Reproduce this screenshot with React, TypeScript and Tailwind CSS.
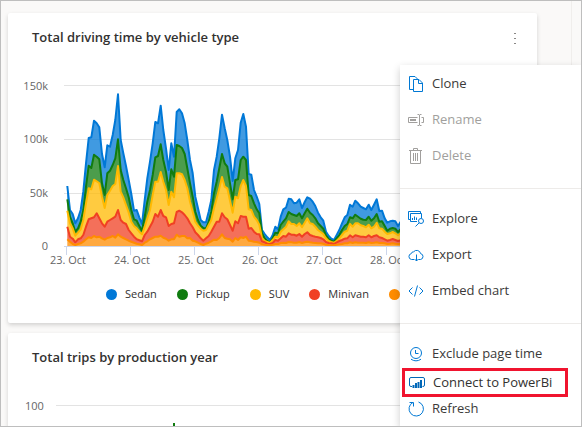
import React from "react";

type Series = { name: string; color: string; tops: number[] };

const BASE = 498;
const STEP = 8;
const START = 22;

/* Upper edge of every stacked area, one value an hour, in thirds of a pixel. */
const SERIES: Series[] = [
  {
    name: "Sedan",
    color: "#0078d7",
    tops: [
      318, 390, 402, 430, 415, 390, 335, 250, 174, 172, 122, 130, 142, 222, 262, 196, 200, 165, 120, 43, 180, 220, 258, 300,
      342, 392, 390, 412, 432, 360, 295, 245, 190, 126, 130, 77, 150, 205, 270, 190, 230, 96, 88, 100, 130, 180, 240, 280,
      350, 385, 420, 427, 427, 395, 360, 270, 230, 175, 104, 145, 180, 230, 303, 235, 210, 128, 102, 140, 282, 284, 330, 350,
      372, 450, 462, 472, 480, 465, 440, 448, 410, 388, 383, 356, 358, 370, 368, 358, 384, 366, 352, 356, 365, 378, 398, 412,
      422, 455, 468, 476, 480, 465, 450, 430, 412, 405, 374, 380, 362, 370, 380, 384, 388, 374, 390, 374, 358, 393, 392, 415,
      428, 424, 422, 424, 438, 425, 420,
    ],
  },
  {
    name: "Pickup",
    color: "#107c10",
    tops: [
      358, 410, 430, 455, 445, 425, 390, 320, 257, 264, 224, 230, 238, 310, 345, 280, 272, 255, 235, 178, 270, 300, 325, 352,
      390, 418, 422, 438, 452, 410, 365, 330, 285, 232, 228, 193, 240, 275, 330, 268, 290, 195, 198, 204, 222, 265, 310, 350,
      395, 420, 437, 444, 446, 425, 395, 340, 305, 265, 222, 250, 260, 310, 358, 300, 298, 240, 230, 240, 345, 348, 370, 388,
      400, 460, 475, 483, 487, 475, 458, 460, 435, 425, 415, 396, 402, 405, 408, 400, 415, 400, 386, 398, 405, 415, 430, 438,
      446, 466, 477, 482, 485, 475, 465, 450, 438, 432, 412, 415, 404, 410, 416, 419, 420, 410, 422, 415, 402, 425, 424, 438,
      452, 446, 444, 446, 456, 448, 446,
    ],
  },
  {
    name: "SUV",
    color: "#ffb900",
    tops: [
      392, 430, 445, 467, 458, 448, 420, 370, 325, 328, 299, 304, 310, 350, 384, 345, 332, 318, 312, 258, 335, 352, 375, 398,
      425, 438, 445, 455, 463, 440, 415, 390, 345, 305, 305, 276, 305, 330, 375, 335, 352, 280, 280, 283, 300, 325, 365, 395,
      425, 437, 446, 452, 450, 435, 420, 385, 355, 325, 291, 320, 325, 362, 398, 350, 355, 318, 300, 318, 388, 390, 410, 420,
      434, 474, 483, 486, 489, 480, 470, 472, 455, 448, 440, 424, 432, 432, 438, 430, 442, 428, 415, 430, 432, 440, 450, 456,
      462, 475, 483, 486, 488, 482, 475, 465, 455, 452, 432, 440, 430, 430, 436, 438, 442, 434, 445, 440, 428, 445, 446, 455,
      462, 460, 456, 460, 466, 460, 458,
    ],
  },
  {
    name: "Minivan",
    color: "#f04023",
    tops: [
      440, 470, 476, 487, 478, 475, 465, 440, 418, 415, 412, 400, 415, 430, 440, 425, 420, 415, 410, 390, 420, 428, 432, 450,
      460, 470, 478, 481, 484, 465, 455, 440, 425, 402, 410, 390, 408, 412, 438, 432, 430, 396, 392, 397, 405, 415, 430, 442,
      457, 465, 475, 482, 475, 468, 455, 440, 425, 425, 400, 412, 418, 435, 452, 424, 430, 408, 410, 410, 446, 444, 455, 462,
      463, 484, 487, 491, 492, 489, 480, 482, 475, 468, 470, 460, 464, 464, 467, 462, 470, 462, 457, 465, 468, 470, 472, 474,
      478, 486, 489, 490, 492, 487, 483, 480, 476, 475, 466, 472, 466, 468, 470, 470, 472, 466, 472, 468, 466, 472, 474, 478,
      482, 480, 477, 480, 483, 481, 480,
    ],
  },
  {
    name: "",
    color: "#ff8c00",
    tops: [
      478, 485, 492, 495, 492, 490, 485, 478, 472, 474, 468, 472, 470, 475, 479, 474, 472, 468, 473, 463, 470, 474, 478, 482,
      485, 488, 491, 493, 495, 488, 484, 478, 474, 470, 470, 467, 473, 476, 482, 478, 478, 464, 470, 468, 468, 475, 474, 482,
      484, 488, 492, 495, 491, 488, 484, 479, 480, 474, 463, 474, 476, 478, 485, 474, 480, 472, 474, 470, 482, 483, 485, 486,
      488, 493, 494, 495, 496, 494, 492, 492, 489, 488, 489, 486, 487, 488, 488, 486, 489, 487, 485, 487, 488, 489, 490, 490,
      491, 494, 495, 496, 496, 494, 493, 492, 490, 490, 487, 489, 487, 488, 488, 488, 489, 487, 489, 488, 487, 489, 489, 490,
      492, 491, 490, 491, 492, 491, 491,
    ],
  },
];

const DAYS = ["23. Oct", "24. Oct", "25. Oct", "26. Oct", "27. Oct", "28. Oct"];

const points = (tops: number[]) =>
  tops.map((y, i) => `${(60 + (START + STEP * i) / 3).toFixed(1)},${(80 + y / 3).toFixed(1)}`);

function AreaChart() {
  return (
    <svg viewBox="20 63 500 207" className="block h-[207px] w-[500px]" role="img" aria-label="Total driving time by vehicle type">
      <g stroke="#e3e3e3">
        <path d="M64 85.5H520M64 139.5H520M64 193.5H520" />
      </g>
      {SERIES.map((s, i) => {
        const top = points(s.tops);
        const below = SERIES[i + 1] ? SERIES[i + 1].tops : s.tops.map(() => BASE);
        return <polygon key={s.color} points={[...top, ...points(below).reverse()].join(" ")} fill={s.color} fillOpacity={0.75} />;
      })}
      {SERIES.map((s) => (
        <polyline key={s.color} points={points(s.tops).join(" ")} fill="none" stroke={s.color} strokeWidth={2} strokeLinejoin="round" />
      ))}
      <path d="M64 246.5H520" stroke="#ccd6eb" />
      {DAYS.map((d, i) => (
        <g key={d}>
          <path d={`M${67 + i * 64 - 0.5} 246v9`} stroke="#ccd6eb" />
          <text x={68 + i * 64} y={264} textAnchor="middle" fill="#666666" className="text-[11px]">
            {d}
          </text>
        </g>
      ))}
      <g fill="#666666" textAnchor="end" className="text-[11px]">
        <text x={48} y={90}>150k</text>
        <text x={48} y={143}>100k</text>
        <text x={48} y={197}>50k</text>
        <text x={48} y={250}>0</text>
      </g>
    </svg>
  );
}

function Card({ title, menu, children }: { title: string; menu?: boolean; children: React.ReactNode }) {
  return (
    <section className="shrink-0 rounded-[2px] bg-white shadow-[0_2px_4px_rgba(0,0,0,0.16)]">
      <header className="flex h-[50px] items-center justify-between pr-4 pl-6">
        <h2 className="text-[13px] font-semibold text-[#323130]">{title}</h2>
        {menu && (
          <button type="button" aria-label="More options" className="flex h-6 w-3 flex-col items-center justify-center gap-1">
            <span className="h-px w-0.5 bg-[#8a8886]" />
            <span className="h-px w-0.5 bg-[#8a8886]" />
            <span className="h-px w-0.5 bg-[#8a8886]" />
          </button>
        )}
      </header>
      {children}
    </section>
  );
}

function Icon({ children }: { children: React.ReactNode }) {
  return (
    <svg viewBox="0 0 16 16" className="size-4 shrink-0" fill="none" stroke="currentColor" aria-hidden="true">
      {children}
    </svg>
  );
}

const icons = {
  clone: (
    <Icon>
      <path d="M5 13.500H1.500V.500H7L9.500 3M5.500 15.500V3.500H11L14.500 7V15.500zM10.500 3.500V7.500H14.500" />
    </Icon>
  ),
  rename: (
    <Icon>
      <path d="M9.500 5.500H.5V10.500H9.500M13.500 5.500H15.500V10.500H13.500M9.500 2.500H11L11.500 3L12 2.500H13.500M11.500 3V13M9.500 13.500H11L11.500 13L12 13.500H13.500" />
      <path d="M2 8H8" strokeWidth={2} />
    </Icon>
  ),
  trash: (
    <Icon>
      <path d="M1 2.500H14M5.500 2.500V.5H9.500V2.500M2.500 2.500V15.500H12.500V2.500M5.500 5V13M7.500 5V13M9.500 5V13" />
    </Icon>
  ),
  explore: (
    <Icon>
      <path d="M2.500 8.500H.5V.5H12.500V2.500M9 10.500H2.500V2.500H13.500V7M4.500 9V7M6.500 9V5.500M8.500 9V6.500" />
      <circle cx="13" cy="10" r="2.500" />
      <path d="M11.200 11.800L7.500 15.500" />
    </Icon>
  ),
  export: (
    <Icon>
      <path d="M6 12.500H3.500A3 3 0 0 1 3.300 6.600A2.200 2.200 0 0 1 5.600 4.800A4 4 0 0 1 12.600 6.600A3 3 0 0 1 12.500 12.500H10.500M8.500 7.500V14M6.500 12L8.500 14L10.500 12" />
    </Icon>
  ),
  embed: (
    <Icon>
      <path d="M4.500 4.500L1 8L4.500 11.500M11.500 4.500L15 8L11.500 11.500M9.500 2.500L6.500 13.500" />
    </Icon>
  ),
  clock: (
    <Icon>
      <circle cx="8" cy="7" r="5.500" />
      <path d="M7.500 4V7.500H10.500M3 13.200Q8 16.500 13 13.200" />
    </Icon>
  ),
  powerbi: (
    <Icon>
      <path d="M3 11.500H2A1.500 1.500 0 0 1 .5 10V4A1.500 1.500 0 0 1 2 2.500H14A1.500 1.500 0 0 1 15.500 4V10A1.500 1.500 0 0 1 14 11.500H13.500" />
      <path d="M4.500 13V10M7 13V8M9.500 13V7M12 13V5" strokeWidth={2} />
    </Icon>
  ),
  refresh: (
    <Icon>
      <path d="M10.500 1A7.200 7.200 0 1 1 5 1.400M1.500 1.500H5.500V5.500" />
    </Icon>
  ),
};

function Item({ icon, label, size = "h-9", disabled }: { icon: React.ReactNode; label: string; size?: string; disabled?: boolean }) {
  return (
    <button
      type="button"
      role="menuitem"
      disabled={disabled}
      className={`flex w-full items-center gap-2 px-2 text-[13px] whitespace-nowrap text-[#0078d4] disabled:text-[#a19f9d] ${size}`}
    >
      {icon}
      <span className={disabled ? "text-[#a19f9d]" : "text-[#3b3a39]"}>{label}</span>
    </button>
  );
}

function ContextMenu() {
  return (
    <div role="menu" className="absolute top-16 right-0 bottom-0 w-[181px] bg-white pt-px shadow-[0_3px_8px_rgba(0,0,0,0.2)]">
      <Item icon={icons.clone} label="Clone" />
      <Item icon={icons.rename} label="Rename" disabled />
      <Item icon={icons.trash} label="Delete" disabled />
      <hr className="mt-3.5 mb-3 border-[#edebe9]" />
      <Item icon={icons.explore} label="Explore" />
      <Item icon={icons.export} label="Export" />
      <Item icon={icons.embed} label="Embed chart" />
      <hr className="mt-3.5 mb-3 border-[#edebe9]" />
      <div className="pt-1">
        <Item icon={icons.clock} label="Exclude page time" size="h-7" />
      </div>
      <button
        type="button"
        role="menuitem"
        className="ml-0.5 flex h-[29px] w-[166px] items-center gap-2 border-3 border-[#f0142f] pl-1 text-[13px] whitespace-nowrap text-[#0067b8]"
      >
        {icons.powerbi}
        <span className="text-[#323130]">Connect to PowerBi</span>
      </button>
      <Item icon={icons.refresh} label="Refresh" size="h-6" />
    </div>
  );
}

export default function App() {
  return (
    <div className="relative flex h-screen overflow-hidden border border-[#bebebe] bg-[#faf9f8] font-['Open_Sans','Noto_Sans',sans-serif]">
      <main className="flex min-w-0 flex-1 flex-col gap-2.5 overflow-hidden pt-3 pr-[34px] pl-[7px]">
        <Card title="Total driving time by vehicle type" menu>
          <div className="overflow-hidden pl-3">
            <AreaChart />
          </div>
          <ul className="flex h-[53px] items-center gap-5 overflow-hidden pb-[5px] pl-[98px] text-[11px] text-[#323130]">
            {SERIES.map((s) => (
              <li key={s.color} className="flex shrink-0 items-center gap-2">
                <span className="size-[11px] rounded-full" style={{ backgroundColor: s.color }} />
                {s.name}
              </li>
            ))}
          </ul>
        </Card>
        <Card title="Total trips by production year">
          <div className="overflow-hidden pl-3">
            <svg viewBox="20 383 500 60" className="block h-[60px] w-[500px]" role="img" aria-label="Total trips by production year">
              <path d="M56 405.500H520" stroke="#e3e3e3" />
              <text x={25} y={410} fill="#666666" className="text-[11px]">100</text>
              <path d="M174 423V443" stroke="#107c10" strokeWidth={2} />
            </svg>
          </div>
        </Card>
      </main>
      <aside className="w-2.5 shrink-0 border-l border-[#f0eeec]" />
      <ContextMenu />
    </div>
  );
}
